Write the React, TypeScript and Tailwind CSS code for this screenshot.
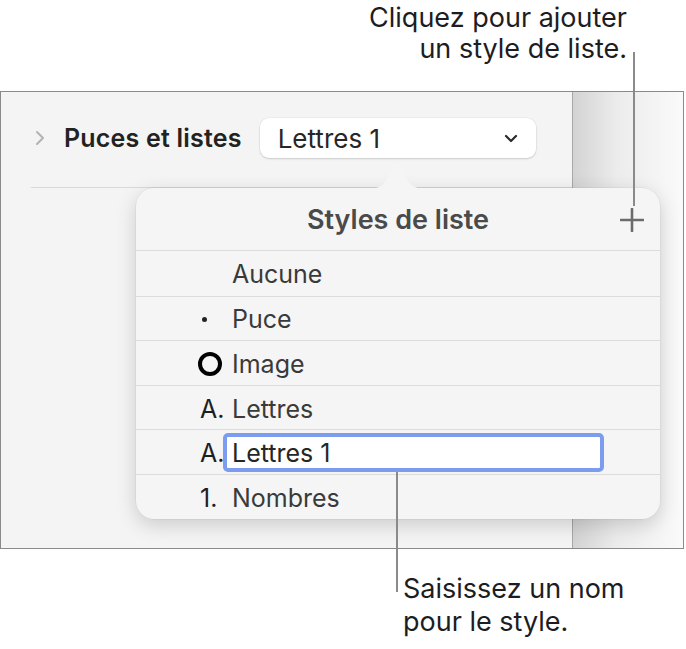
import React from "react"

interface ListStyle {
  id: number
  marker: "none" | "dot" | "ring" | "text"
  label?: string
  name: string
  editing?: boolean
}

const listStyles: ListStyle[] = [
  { id: 1, marker: "none", name: "Aucune" },
  { id: 2, marker: "dot", name: "Puce" },
  { id: 3, marker: "ring", name: "Image" },
  { id: 4, marker: "text", label: "A.", name: "Lettres" },
  { id: 5, marker: "text", label: "A.", name: "Lettres 1", editing: true },
  { id: 6, marker: "text", label: "1.", name: "Nombres" },
]

const Marker = ({ item }: { item: ListStyle }) => {
  if (item.marker === "dot") return <span className="ml-[4px] h-[5px] w-[5px] rounded-full bg-[#222]" />
  if (item.marker === "ring") return <span className="h-[24px] w-[24px] rounded-full border-[4px] border-black" />
  if (item.marker === "text") return <span className="ml-[2px] text-[#1f1f1f]">{item.label}</span>
  return null
}

const App = () => {
  return (
    <div className="relative h-[649px] w-[686px] overflow-hidden bg-white font-['Inter',sans-serif] text-[25px] leading-[31px] text-[#1d1d1f]">
      {/* top callout */}
      <div className="h-[91px] pr-[59px] pt-[2px] text-right text-[27px]">
        <p>Cliquez pour ajouter</p>
        <p>un style de liste.</p>
      </div>

      {/* app frame */}
      <div className="flex h-[458px] w-[684px] border border-[#8a8a8a]">
        <div className="w-[571px] bg-[#f4f4f4] pl-[30px]">
          <div className="flex h-[96px] items-center border-b border-[#d9d9d9] pb-[3px]">
            <svg width="10" height="16" viewBox="0 0 10 16" className="ml-[4px]">
              <path d="M2 2l6 6-6 6" fill="none" stroke="#b3b3b3" strokeWidth="2" strokeLinecap="round" strokeLinejoin="round" />
            </svg>
            <span className="ml-[19px] font-semibold tracking-[0.2px] text-[#222]">Puces et listes</span>
            <div className="ml-[18px] flex h-[40px] w-[276px] items-center justify-between rounded-[9px] bg-white pl-[18px] pr-[18px] shadow-[0_1px_2px_rgba(0,0,0,0.15),0_0_0_0.5px_rgba(0,0,0,0.06)]">
              <span className="text-[26px] text-[#262626]">Lettres 1</span>
              <svg width="14" height="9" viewBox="0 0 14 9">
                <path d="M2 2l5 5 5-5" fill="none" stroke="#2a2a2a" strokeWidth="2.2" strokeLinecap="round" strokeLinejoin="round" />
              </svg>
            </div>
          </div>
        </div>
        <div className="flex-1 border-l border-[#a8a8a8] bg-gradient-to-r from-[#d3d3d3] via-[#ececec] via-40% to-[#fafafa]" />
      </div>

      {/* bottom callout */}
      <div className="pl-[403px] pt-[23px] text-[27px] leading-[33px]">
        <p>Saisissez un nom</p>
        <p>pour le style.</p>
      </div>

      {/* popover */}
      <div className="absolute left-[136px] top-[188px] w-[524px] rounded-[18px] bg-[#f5f5f5] shadow-[0_6px_20px_rgba(0,0,0,0.17),0_0_0_0.5px_rgba(0,0,0,0.07)]">
        <svg width="64" height="30" viewBox="0 0 64 30" className="absolute left-[229px] top-[-28px]">
          <path d="M0 29 C13 29 17 27 22 19 L29 5 C30.5 2 33.5 2 35 5 L42 19 C47 27 51 29 64 29 L64 30 L0 30 Z" fill="#f5f5f5" />
        </svg>
        <div className="relative flex h-[63px] items-center justify-center border-b border-[#dcdcdc]">
          <span className="text-[27px] font-semibold text-[#4a4a4a]">Styles de liste</span>
          <svg width="24" height="24" viewBox="0 0 24 24" className="absolute right-[16px] top-[20px]">
            <path d="M12 1v22M1 12h22" stroke="#6b6b6b" strokeWidth="2.6" strokeLinecap="round" />
          </svg>
        </div>
        {listStyles.map((item, index) => (
          <div
            key={item.id}
            className={`flex h-[44.6px] items-center pt-[3px] ${index > 0 ? "border-t border-[#dcdcdc]" : ""}`}
          >
            <div className="flex w-[96px] items-center pl-[62px]">
              <Marker item={item} />
            </div>
            {item.editing ? (
              <div className="-ml-[9px] -mt-[3px] flex h-[39px] w-[381px] items-center rounded-[5px] border-[4px] border-[#7c9def] bg-white pl-[5px] pt-[3px]">
                <span className="text-[#262626]">{item.name}</span>
              </div>
            ) : (
              <span className="text-[#3a3a3a]">{item.name}</span>
            )}
          </div>
        ))}
      </div>

      {/* leader lines */}
      <div className="absolute left-[633px] top-[52px] h-[154px] w-[2px] bg-[#8a8a8a]" />
      <div className="absolute left-[396px] top-[472px] h-[120px] w-[2px] bg-[#8a8a8a]" />
    </div>
  )
}

export default App
